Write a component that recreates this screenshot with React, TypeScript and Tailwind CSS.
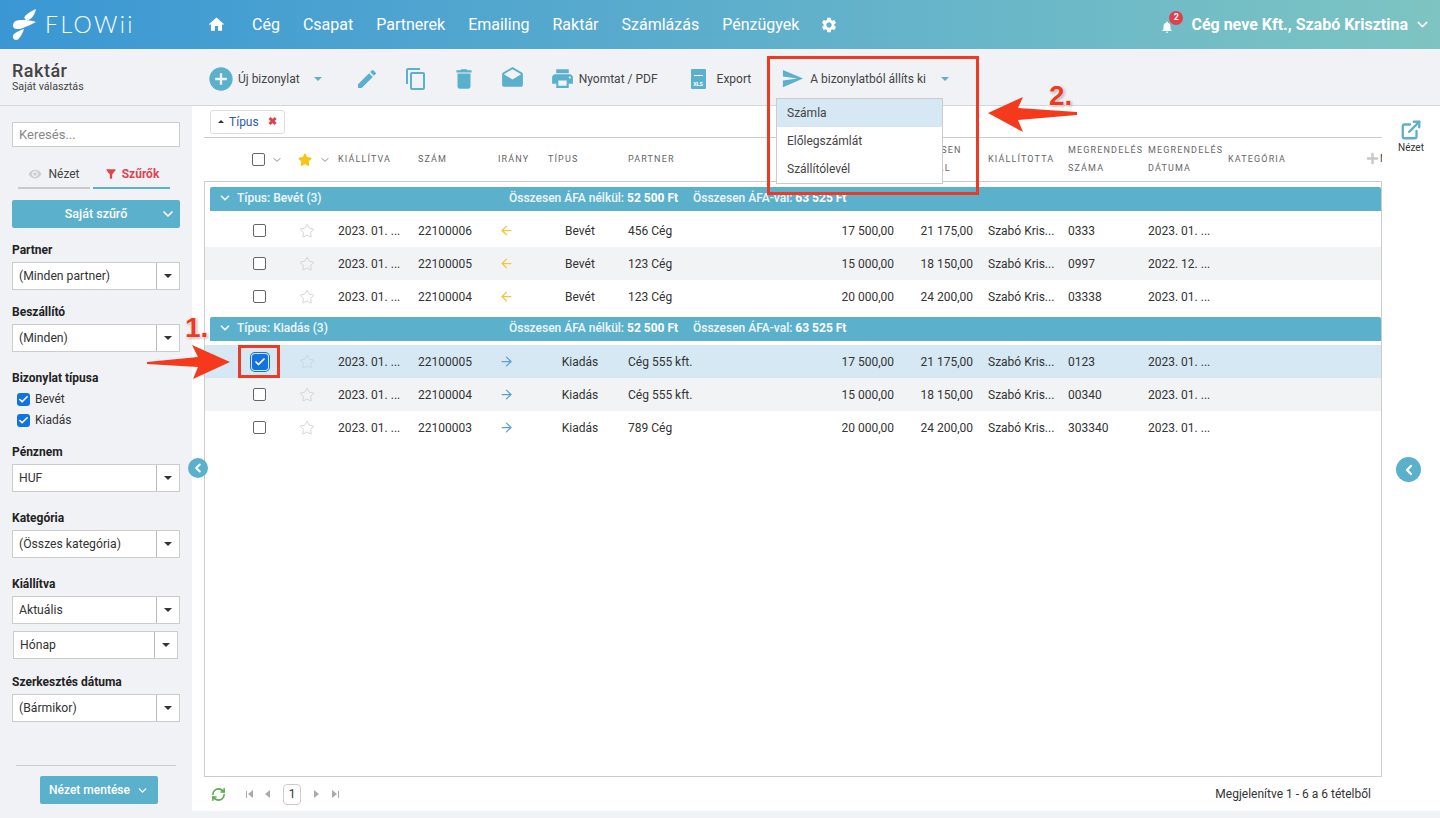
import { ArrowLeft, ArrowRight, Check, ChevronDown, ChevronLeft, ExternalLink, RefreshCw, Star } from "lucide-react";
import { FaPlus } from "react-icons/fa";
import { MdAddCircle, MdContentCopy, MdDelete, MdDrafts, MdEdit, MdFilterAlt, MdHome, MdNotifications, MdPrint, MdSend, MdSettings, MdVisibility } from "react-icons/md";

const navItems = ["Cég", "Csapat", "Partnerek", "Emailing", "Raktár", "Számlázás", "Pénzügyek"];

const bevetRows = [
  { num: "22100006", partner: "456 Cég", net: "17 500,00", gross: "21 175,00", order: "0333", date: "2023. 01. ..." },
  { num: "22100005", partner: "123 Cég", net: "15 000,00", gross: "18 150,00", order: "0997", date: "2022. 12. ..." },
  { num: "22100004", partner: "123 Cég", net: "20 000,00", gross: "24 200,00", order: "03338", date: "2023. 01. ..." },
];

const kiadasRows = [
  { num: "22100005", partner: "Cég 555 kft.", net: "17 500,00", gross: "21 175,00", order: "0123", date: "2023. 01. ..." },
  { num: "22100004", partner: "Cég 555 kft.", net: "15 000,00", gross: "18 150,00", order: "00340", date: "2023. 01. ..." },
  { num: "22100003", partner: "789 Cég", net: "20 000,00", gross: "24 200,00", order: "303340", date: "2023. 01. ..." },
];

function Caret({ className = "border-t-[#333]" }: { className?: string }) {
  return <span className={`block w-0 h-0 border-x-[4px] border-x-transparent border-t-[4px] ${className}`} />;
}

function CheckBox({ checked = false, small = false }: { checked?: boolean; small?: boolean }) {
  if (checked) {
    return (
      <span className={`flex items-center justify-center rounded-[3px] bg-[#1273de] ${small ? "w-[13px] h-[13px]" : "w-[16px] h-[16px] ring-1 ring-[#1273de] ring-offset-1 ring-offset-[#d5e8f3]"}`}>
        <Check size={small ? 11 : 12} strokeWidth={3.5} className="text-white" />
      </span>
    );
  }
  return <span className="block w-[13px] h-[13px] rounded-[2px] border border-[#666] bg-white" />;
}

function Select({ value, className = "w-[168px]" }: { value: string; className?: string }) {
  return (
    <div className={`flex h-[28px] bg-white border border-[#ccc] text-[12.2px] text-[#333] ${className}`}>
      <div className="flex-1 flex items-center pl-[6px]">{value}</div>
      <div className="w-[23px] flex items-center justify-center border-l border-[#bbb]">
        <Caret />
      </div>
    </div>
  );
}

function Label({ children, className = "" }: { children: React.ReactNode; className?: string }) {
  return <div className={`text-[12px] font-bold text-[#222] leading-[14px] ${className}`}>{children}</div>;
}

function Sidebar() {
  return (
    <aside className="relative w-[192px] shrink-0 bg-[#f1f2f6] px-[12px] pt-[16px]">
      <div className="h-[25px] bg-white border border-[#ccc] pl-[6px] flex items-center text-[13px] text-[#888]">Keresés...</div>
      <div className="flex mt-[14px] h-[28px] px-[6px] gap-[3px] text-[12px]">
        <div className="w-[72px] flex items-center justify-center gap-[6px] border-b-2 border-[#c9c9c9] text-[#444]">
          <MdVisibility size={14} className="text-[#cfcfcf]" />
          Nézet
        </div>
        <div className="w-[77px] flex items-center justify-center gap-[4px] border-b-2 border-[#5bb0cb] text-[#e0444f] font-bold">
          <MdFilterAlt size={14} />
          Szűrők
        </div>
      </div>
      <div className="relative mt-[11px] h-[28px] bg-[#5bb0cb] rounded-[2px] flex items-center justify-center text-[12.5px] font-medium text-white">
        Saját szűrő
        <ChevronDown size={16} strokeWidth={2.5} className="absolute right-[4px]" />
      </div>
      <Label className="mt-[15px] mb-[5px]">Partner</Label>
      <Select value="(Minden partner)" />
      <Label className="mt-[15px] mb-[5px]">Beszállító</Label>
      <Select value="(Minden)" />
      <Label className="mt-[19px]">Bizonylat típusa</Label>
      <div className="mt-[7px] pl-[5px] flex flex-col gap-[7px] text-[12px] text-[#333]">
        <div className="flex items-center gap-[5px] h-[14px]"><CheckBox checked small />Bevét</div>
        <div className="flex items-center gap-[5px] h-[14px]"><CheckBox checked small />Kiadás</div>
      </div>
      <Label className="mt-[18px] mb-[5px]">Pénznem</Label>
      <Select value="HUF" />
      <Label className="mt-[19px] mb-[5px]">Kategória</Label>
      <Select value="(Összes kategória)" />
      <Label className="mt-[19px] mb-[5px]">Kiállítva</Label>
      <Select value="Aktuális" />
      <Select value="Hónap" className="w-[165px] ml-px mt-[7px]" />
      <Label className="mt-[16px] mb-[5px]">Szerkesztés dátuma</Label>
      <Select value="(Bármikor)" />
      <div className="absolute left-[16px] right-[16px] bottom-[52px] border-t border-[#ccc]" />
      <div className="absolute left-[40px] bottom-[14px] w-[118px] h-[28px] bg-[#5bb0cb] rounded-[2px] flex items-center justify-center gap-[6px] text-[12px] font-medium text-white">
        Nézet mentése
        <ChevronDown size={13} strokeWidth={2.5} />
      </div>
      <div className="absolute -right-[16px] top-[352px] z-10 w-[20px] h-[20px] rounded-full bg-[#5bb0cb] flex items-center justify-center">
        <ChevronLeft size={14} strokeWidth={3.5} className="text-white" />
      </div>
    </aside>
  );
}

const gridCols = "grid grid-cols-[46px_40px_80px_80px_50px_80px_170px_96px_94px_80px_80px_80px_1fr] items-center";

function HeaderCell({ children, className = "" }: { children: React.ReactNode; className?: string }) {
  return <div className={`-mt-[2px] text-[9px] leading-[18px] tracking-[1.15px] text-[#666] whitespace-nowrap ${className}`}>{children}</div>;
}

function TableHeader() {
  return (
    <div className={`${gridCols} relative h-[43px] pl-[48px]`}>
      <div className="flex items-center gap-[6px]">
        <CheckBox />
        <ChevronDown size={12} className="text-[#888]" />
      </div>
      <div className="flex items-center gap-[7px]">
        <Star size={14} fill="#f5c518" className="text-[#f5c518]" />
        <ChevronDown size={12} className="text-[#888]" />
      </div>
      <HeaderCell>KIÁLLÍTVA</HeaderCell>
      <HeaderCell>SZÁM</HeaderCell>
      <HeaderCell>IRÁNY</HeaderCell>
      <HeaderCell>TÍPUS</HeaderCell>
      <HeaderCell>PARTNER</HeaderCell>
      <div />
      <HeaderCell className="pl-[14px]">ÖSSZESEN<br />ÁFA-VAL</HeaderCell>
      <HeaderCell>KIÁLLÍTOTTA</HeaderCell>
      <HeaderCell>MEGRENDELÉS<br />SZÁMA</HeaderCell>
      <HeaderCell>MEGRENDELÉS<br />DÁTUMA</HeaderCell>
      <HeaderCell>KATEGÓRIA</HeaderCell>
      <div className="absolute right-0 top-[14px] flex items-center gap-px">
        <FaPlus size={13} className="text-[#c8c8c8]" />
        <span className="w-[2px] overflow-hidden text-[10px] leading-[13px] text-[#444]">N</span>
      </div>
    </div>
  );
}

function GroupRow({ label, className = "" }: { label: string; className?: string }) {
  return (
    <div className={`ml-[5px] h-[24px] pb-[2px] bg-[#5bb0cb] rounded-t-[2px] flex items-center text-[12px] text-white/90 font-medium ${className}`}>
      <ChevronDown size={14} strokeWidth={3} className="ml-[8px] mr-[5px] shrink-0" />
      <span className="w-[272px]">{label}</span>
      <span className="w-[184px]">Összesen ÁFA nélkül: <b className="text-white">52 500 Ft</b></span>
      <span>Összesen ÁFA-val: <b className="text-white">63 525 Ft</b></span>
    </div>
  );
}

function DataRow({ row, type, index, selected = false }: { row: (typeof bevetRows)[number]; type: string; index: number; selected?: boolean }) {
  const bg = selected ? "bg-[#d5e8f3]" : index === 1 ? "bg-[#f2f3f5]" : "bg-white";
  return (
    <div className={`${gridCols} ${bg} h-[33px] pl-[47px] text-[12px] text-[#333]`}>
      <div className={selected ? "" : "pl-px"}><CheckBox checked={selected} /></div>
      <Star size={16} strokeWidth={1.5} className={selected ? "ml-px text-[#c9d9e3]" : "ml-px text-[#d5d5d5]"} />
      <div>2023. 01. ...</div>
      <div>{row.num}</div>
      <div className="pl-[1px]">
        {type === "Bevét" ? <ArrowLeft size={15} className="text-[#f2c53d]" /> : <ArrowRight size={15} className="text-[#5a9fd4]" />}
      </div>
      <div className="text-center pr-[16px]">{type}</div>
      <div>{row.partner}</div>
      <div className="text-right">{row.net}</div>
      <div className="text-right pr-[15px]">{row.gross}</div>
      <div>Szabó Kris...</div>
      <div>{row.order}</div>
      <div>{row.date}</div>
      <div />
    </div>
  );
}

function Triangle({ right = false }: { right?: boolean }) {
  return <span className={`block w-0 h-0 border-y-[4px] border-y-transparent ${right ? "border-l-[5px] border-l-[#aaa]" : "border-r-[5px] border-r-[#aaa]"}`} />;
}

function Pager() {
  return (
    <div className="h-[34px] flex items-center pl-[7px] pr-[11px] text-[12px] text-[#333]">
      <RefreshCw size={15} strokeWidth={2.5} className="text-[#58ab4b]" />
      <div className="flex items-center ml-[20px] text-[#aaa]">
        <span className="flex items-center gap-px"><span className="w-px h-[7px] bg-[#aaa]" /><Triangle /></span>
        <span className="ml-[12px]"><Triangle /></span>
        <span className="ml-[13px] w-[18px] h-[21px] border border-[#ccc] rounded-[4px] flex items-center justify-center text-[#333] text-[12px]">1</span>
        <span className="ml-[13px]"><Triangle right /></span>
        <span className="ml-[13px] flex items-center gap-px"><Triangle right /><span className="w-px h-[7px] bg-[#aaa]" /></span>
      </div>
      <div className="ml-auto">Megjelenítve 1 - 6 a 6 tételből</div>
    </div>
  );
}

function Toolbar() {
  return (
    <div className="h-[57px] bg-[#f1f2f6] border-b border-[#d5d7de] flex items-center text-[12px] text-[#444]">
      <div className="w-[192px] shrink-0 pl-[12px]">
        <div className="text-[18px] leading-[20px] font-medium tracking-[0.5px] text-[#444]">Raktár</div>
        <div className="text-[10.7px] leading-[12px] text-[#444]">Saját választás</div>
      </div>
      <div className="flex items-center text-[#5bb0cb] mt-[3px]">
        <MdAddCircle size={28} className="ml-[15px]" />
        <span className="ml-[3px] text-[#444]">Új bizonylat</span>
        <span className="ml-[14px]"><Caret className="border-t-[#5bb0cb]" /></span>
        <MdEdit size={24} className="ml-[33px]" />
        <MdContentCopy size={24} className="ml-[25px]" />
        <MdDelete size={26} className="ml-[23px]" />
        <MdDrafts size={25} className="ml-[23px]" />
        <MdPrint size={25} className="ml-[25px]" />
        <span className="ml-[4px] text-[#444]">Nyomtat / PDF</span>
        <span className="ml-[33px] relative w-[15px] h-[20px] bg-[#5bb0cb] rounded-[1px] flex flex-col items-center justify-end text-[5.5px] leading-[9px] font-bold text-white">
          <span className="absolute left-[3px] right-[3px] top-[6px] h-px bg-white" />
          XLS
        </span>
        <span className="ml-[11px] text-[#444]">Export</span>
        <MdSend size={23} className="ml-[30px]" />
        <span className="ml-[6px] text-[#444]">A bizonylatból állíts ki</span>
        <span className="ml-[15px]"><Caret className="border-t-[#5bb0cb]" /></span>
      </div>
    </div>
  );
}

function Annotations() {
  return (
    <>
      <div className="absolute left-[776px] top-[98px] w-[167px] z-20 bg-white border border-[#ccc] text-[12px] text-[#444]">
        <div className="h-[28px] flex items-center pl-[10px] bg-[#d5e8f3]">Számla</div>
        <div className="h-[28px] flex items-center pl-[10px]">Előlegszámlát</div>
        <div className="h-[28px] flex items-center pl-[10px]">Szállítólevél</div>
      </div>
      <div className="absolute left-[767px] top-[56px] w-[212px] h-[139px] z-30 border-[3px] border-[#ee3a22]" />
      <div className="absolute left-[238px] top-[345px] w-[42px] h-[33px] z-30 border-[3px] border-[#ee3a22]" />
      <svg className="absolute left-[145px] top-[342px] z-30" width="92" height="40" viewBox="0 0 92 40">
        <polygon points="2,20 53,15 47,3 85,20 48,37 53,25 2,22" fill="#f4391d" />
      </svg>
      <svg className="absolute left-[987px] top-[94px] z-30" width="92" height="40" viewBox="0 0 92 40">
        <polygon points="1,19 36,3 31,14 90,18 90,21 31,26 36,38" fill="#f4391d" />
      </svg>
      <div className="absolute left-[185px] top-[307px] z-30 font-['Liberation_Sans',sans-serif] text-[28px] font-bold text-[#ee3a22] [text-shadow:0_0_2px_white,0_0_2px_white,1px_1px_3px_#888]">1.</div>
      <div className="absolute left-[1049px] top-[75px] z-30 font-['Liberation_Sans',sans-serif] text-[28px] font-bold text-[#ee3a22] [text-shadow:0_0_2px_white,0_0_2px_white,1px_1px_3px_#888]">2.</div>
    </>
  );
}

export default function App() {
  return (
    <div className="relative w-[1440px] h-[818px] overflow-hidden bg-white font-['Roboto',sans-serif] flex flex-col">
      <header className="h-[49px] shrink-0 bg-gradient-to-r from-[#3a97d4] to-[#7dc4c2] flex items-center text-white">
        <div className="w-[200px] shrink-0 flex items-center pl-[12px]">
          <svg width="25" height="32" viewBox="0 0 25 32" fill="white">
            <path d="M24 0 C23 5 20 10 16 11 C13 11.500 11.500 9 13 7 C15 4.500 20 2 24 0 Z" />
            <path d="M24 13 C18 11 10 10.500 5 11.500 C1 12.500 0 17 2 19 C4 21 8 20 12 18.500 C16 17 20 15 24 13 Z" />
            <path d="M12 20 C9 21 5 22.500 2 25 C0 27 1 31 4 31 C7 31 10 26 12 20 Z" />
          </svg>
          <span className="ml-[8px] font-['Lato',sans-serif] font-light text-[23px] tracking-[2.4px] leading-none">FLOWii</span>
        </div>
        <MdHome size={19} className="ml-[7px]" />
        <nav className="flex gap-[23px] ml-[26px] text-[16px]">
          {navItems.map((item) => (
            <span key={item}>{item}</span>
          ))}
        </nav>
        <MdSettings size={18} className="ml-[21px]" />
        <div className="ml-auto flex items-center pr-[9px]">
          <div className="relative mr-[17px] mt-[4px]">
            <MdNotifications size={14} />
            <span className="absolute -top-[9px] left-[9px] w-[14px] h-[14px] rounded-full bg-[#e0404a] text-[9px] font-bold flex items-center justify-center">2</span>
          </div>
          <span className="text-[16px] font-bold">Cég neve Kft., Szabó Krisztina</span>
          <ChevronDown size={17} className="ml-[6px]" />
        </div>
      </header>
      <Toolbar />
      <div className="flex-1 flex min-h-0">
        <Sidebar />
        <main className="flex-1 min-w-0 flex flex-col">
          <div className="flex-1 min-h-0 flex">
            <div className="w-[1178px] ml-[12px] flex flex-col">
              <div className="h-[32px] shrink-0 flex items-center pl-[6px] border-b border-[#ccc]">
                <div className="h-[24px] w-[75px] bg-white border border-[#ddd] rounded-[3px] flex items-center pl-[7px] text-[12px] text-[#2a5cb0]">
                  <span className="w-0 h-0 border-x-[3px] border-x-transparent border-b-[3px] border-b-[#333] mr-[5px]" />
                  Típus
                  <span className="ml-[9px] text-[#d9434e] text-[11px] font-bold leading-none">✖</span>
                </div>
              </div>
              <TableHeader />
              <div className="flex-1 border border-[#ccc] pt-[5px]">
                <GroupRow label="Típus: Bevét (3)" />
                <div className="mt-[3px]">
                  {bevetRows.map((row, i) => (
                    <DataRow key={row.num} row={row} type="Bevét" index={i} />
                  ))}
                </div>
                <GroupRow label="Típus: Kiadás (3)" className="mt-[4px]" />
                <div className="mt-[4px]">
                  {kiadasRows.map((row, i) => (
                    <DataRow key={row.num} row={row} type="Kiadás" index={i} selected={i === 0} />
                  ))}
                </div>
              </div>
              <Pager />
            </div>
            <div className="relative flex-1 flex flex-col items-center pt-[13px] text-[10px] text-[#333]">
              <ExternalLink size={22} strokeWidth={2.5} className="text-[#5bb0cb]" />
              <span className="mt-px leading-[12px]">Nézet</span>
              <div className="absolute left-[14px] top-[351px] w-[25px] h-[25px] rounded-full bg-[#5bb0cb] flex items-center justify-center">
                <ChevronLeft size={16} strokeWidth={3.5} className="text-white" />
              </div>
            </div>
          </div>
          <div className="h-[7px] shrink-0 bg-[#f1f2f6]" />
        </main>
      </div>
      <Annotations />
    </div>
  );
}
